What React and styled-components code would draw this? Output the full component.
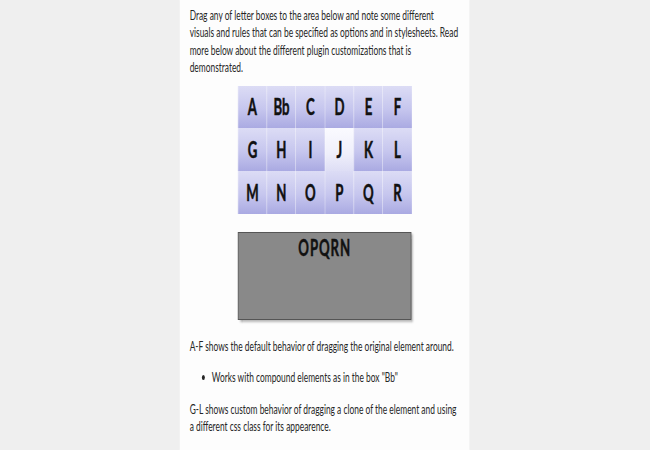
import styled, { createGlobalStyle } from 'styled-components';

// the reference is a horizontally squeezed capture, so the column is laid out
// wide and squeezed back with scaleX
const SQUEEZE = 0.6;
const px = (v) => `${(v / SQUEEZE).toFixed(2)}px`;

const GlobalStyle = createGlobalStyle`
  html, body {
    margin: 0;
    padding: 0;
    background: #efefef;
    overflow: hidden;
  }
  body {
    font-family: Lato, 'Liberation Sans', sans-serif;
  }
`;

const Page = styled.main`
  width: ${px(290)};
  height: 450px;
  margin: 0 auto;
  padding: 6px ${px(10)} 0;
  box-sizing: border-box;
  background: #fdfdfd;
  box-shadow: 0 0 3px rgba(0, 0, 0, 0.05);
  transform: scaleX(${SQUEEZE});
  color: #262626;
  font-size: 14px;
  line-height: 17.4px;
`;

const Text = styled.p`
  margin: 0 0 ${(p) => p.$after || 0}px;
`;

const LetterGrid = styled.div`
  display: grid;
  grid-template-columns: repeat(6, ${px(29)});
  grid-template-rows: repeat(3, 42.7px);
  width: ${px(174)};
  margin: 10px auto 18px;
`;

const Letter = styled.div`
  display: flex;
  align-items: center;
  justify-content: center;
  font-size: 22px;
  font-weight: bold;
  -webkit-text-stroke: 0.5px #111;
  color: #111;
  border-left: 1px solid rgba(255, 255, 255, 0.4);
  background: ${(p) =>
    p.$light
      ? 'linear-gradient(to bottom, #fafaff 0%, #efeffb 60%, #dedef5 100%)'
      : 'linear-gradient(to bottom, #dcdcf5 0%, #c6c6ee 55%, #aaaae2 100%)'};
`;

const DropZone = styled.div`
  width: ${px(172)};
  height: 86px;
  margin: 0 auto 17px;
  background: #898989;
  border: 1px solid #555;
  box-shadow: 3px 2px 3px rgba(0, 0, 0, 0.35);
  text-align: center;
  font-size: 22px;
  font-weight: bold;
  -webkit-text-stroke: 0.5px #111;
  letter-spacing: 1.5px;
  line-height: 30px;
  color: #111;
`;

const Bullets = styled.ul`
  margin: 0 0 14px;
  padding-left: ${px(22)};
  list-style: disc;
`;

const letters = [
  'A', 'Bb', 'C', 'D', 'E', 'F',
  'G', 'H', 'I', 'J', 'K', 'L',
  'M', 'N', 'O', 'P', 'Q', 'R',
];

export default function App() {
  return (
    <>
      <GlobalStyle />
      <Page>
        <Text>
          Drag any of letter boxes to the area below and note some different
          visuals and rules that can be specified as options and in stylesheets.
          Read more below about the different plugin customizations that is
          demonstrated.
        </Text>
        <LetterGrid>
          {letters.map((l) => (
            <Letter key={l} $light={l === 'J'}>
              {l}
            </Letter>
          ))}
        </LetterGrid>
        <DropZone>OPQRN</DropZone>
        <Text $after={14}>
          A-F shows the default behavior of dragging the original element
          around.
        </Text>
        <Bullets>
          <li>Works with compound elements as in the box "Bb"</li>
        </Bullets>
        <Text $after={14}>
          G-L shows custom behavior of dragging a clone of the element and using
          a different css class for its appearence.
        </Text>
        <Bullets>
          <li>Plugin is attached to container element</li>
        </Bullets>
      </Page>
    </>
  );
}
